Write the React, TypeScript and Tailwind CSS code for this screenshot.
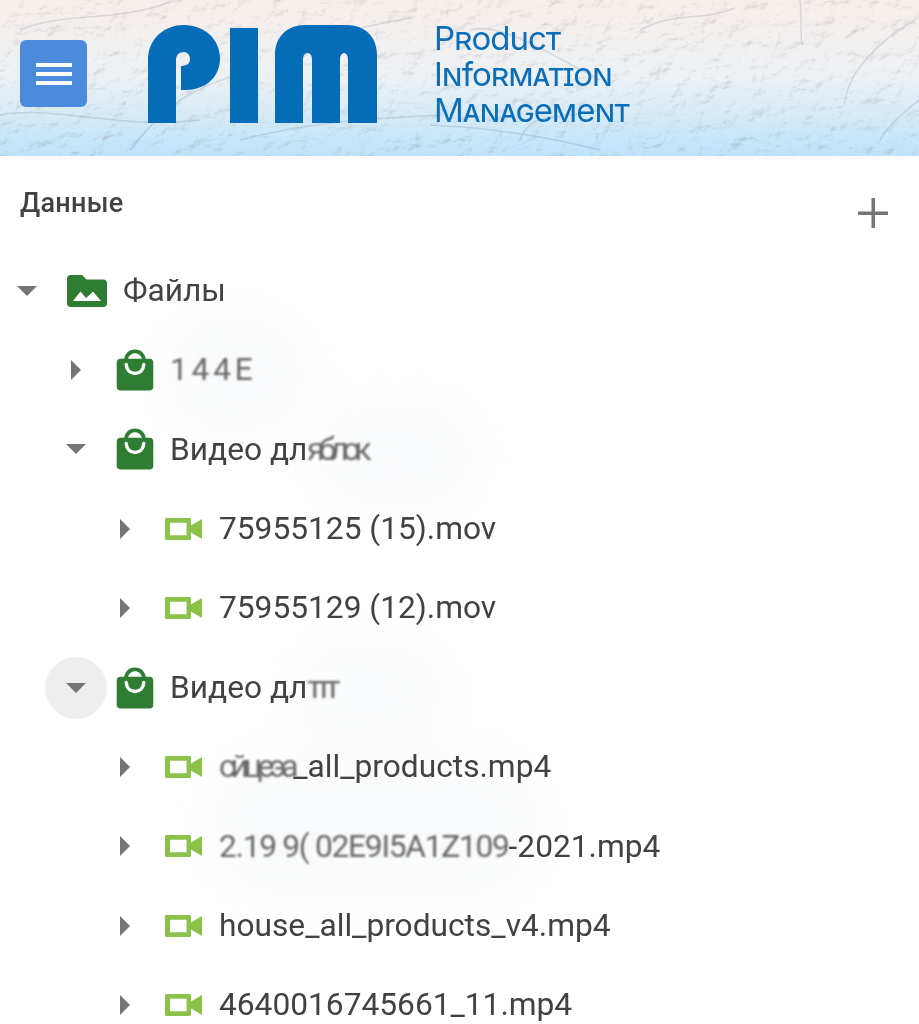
const font = "font-['Roboto',sans-serif]";

function Caret({ open }: { open: boolean }) {
  return (
    <svg width="20" height="20" viewBox="0 0 20 20" className="block">
      {open ? <path d="M0 5h20l-10 10z" fill="#757575" /> : <path d="M5 0v20l10-10z" fill="#757575" />}
    </svg>
  );
}

function Bag() {
  return (
    <svg width="38" height="42" viewBox="0 0 38 42" className="block">
      <path fillRule="evenodd" d="M19 0.500C12.800 0.500 9 4.800 8.200 9.800H4.200C2.200 9.800 0.700 11.400 0.700 13.400V38c0 2 1.600 3.600 3.600 3.600h29.400c2 0 3.600-1.600 3.600-3.600V13.400c0-2-1.600-3.600-3.600-3.600H29.800C29 4.800 25.200 0.500 19 0.500zM19 4.200C15.600 4.200 12.900 6.500 12.100 9.800H25.900C25.100 6.500 22.400 4.200 19 4.200z" fill="#2e7d32" />
      <path d="M10.200 15.500C10.700 21 14.200 24.500 19 24.500S27.300 21 27.800 15.500" fill="none" stroke="#fff" strokeWidth="3.400" strokeLinecap="round" />
    </svg>
  );
}

function Folder() {
  return (
    <svg width="40" height="32" viewBox="0 0 40 32" className="block">
      <path d="M3.500 0H15l4.500 4.500H36.500c2 0 3.500 1.500 3.500 3.500v20.500c0 2-1.500 3.500-3.500 3.500H3.500C1.500 32 0 30.500 0 28.500V3.500C0 1.500 1.500 0 3.500 0z" fill="#2e7d32" />
      <path d="M6 26l7.500-9.500 5.500 6.500 4-3.500 3-3 8 9.500z" fill="#fff" />
    </svg>
  );
}

function Video() {
  return (
    <svg width="37" height="22" viewBox="0 0 37 22" className="block">
      <path d="M1.500 0h23c.8 0 1.500.7 1.500 1.500V7.500L37 1v20l-11-6.500v6c0 .8-.7 1.500-1.500 1.500h-23C.7 22 0 21.300 0 20.500v-19C0 .7.700 0 1.500 0zM5 4.800v12.400h16.500V4.800z" fill="#8bc34a" fillRule="evenodd" />
    </svg>
  );
}

function Row({
  indent,
  open,
  icon,
  active,
  children,
}: {
  indent: string;
  open: boolean;
  icon: React.ReactNode;
  active?: boolean;
  children: React.ReactNode;
}) {
  return (
    <div className={`flex h-[79.400px] items-center ${indent}`}>
      <div className={`flex h-[62px] w-[62px] shrink-0 items-center justify-center rounded-full ${active ? "bg-[#eeeeee]" : ""}`}>
        <Caret open={open} />
      </div>
      <div className="flex w-[63px] shrink-0 items-center pl-[9px]">{icon}</div>
      <div className="whitespace-nowrap text-[31.700px] leading-none text-[#424242]">{children}</div>
    </div>
  );
}

function Smudge({ text, track }: { text: string; track: string }) {
  return <span className={`inline-block text-[#666666] blur-[0.8px] ${track}`}>{text}</span>;
}

function Halo({ className }: { className: string }) {
  return <div className={`absolute -z-10 rounded-full bg-[#f9fafb] blur-xl ${className}`} />;
}

const scratches = [
  "M20 30C60 12 120 22 170 2",
  "M130 150C170 100 190 90 250 70",
  "M470 30C500 20 560 60 600 80",
  "M640 30C680 10 700 22 735 8",
  "M800 0C802 20 800 30 802 45",
  "M845 100C850 70 880 40 915 20",
  "M520 140C530 110 560 120 600 110",
  "M0 115C60 105 120 130 200 120",
  "M240 140C300 125 340 120 440 115",
  "M430 125C500 128 560 140 600 150",
  "M880 140C885 130 900 115 919 100",
  "M300 60C320 40 340 30 410 18",
];

export default function App() {
  return (
    <div className={`relative isolate h-[1024px] w-[919px] overflow-hidden bg-white ${font}`}>
      <header className="relative flex h-[156px] items-start overflow-hidden bg-gradient-to-b from-[#f7eeea] via-[#edf1f4] via-50% to-[#bde3f9]">
        <svg className="absolute inset-0 h-full w-full opacity-70 mix-blend-multiply blur-[0.5px]" aria-hidden="true">
          <filter id="tex">
            <feTurbulence type="fractalNoise" baseFrequency="0.05 0.07" numOctaves="4" seed="11" />
            <feDiffuseLighting surfaceScale="2.600" lightingColor="#ffffff" diffuseConstant="1.180">
              <feDistantLight azimuth="45" elevation="62" />
            </feDiffuseLighting>
          </filter>
          <rect width="100%" height="100%" filter="url(#tex)" />
          <g fill="none" stroke="#a8b8c4" strokeWidth="1.500" opacity="0.5">
            {scratches.map((d) => (
              <path key={d} d={d} />
            ))}
          </g>
        </svg>
        <div className="relative ml-[20px] mt-[40px] flex h-[67px] w-[67px] shrink-0 flex-col items-center justify-center gap-[5px] rounded-[6px] bg-[#4a8bdc]">
          <div className="h-[4px] w-[36px] bg-white" />
          <div className="h-[4px] w-[36px] bg-white" />
          <div className="h-[4px] w-[36px] bg-white" />
        </div>
        <svg className="relative ml-[61px] mt-[25px] block shrink-0" width="230" height="98" viewBox="148 25 230 98" role="img" aria-label="PIM logo">
          <path d="M148 123V60C148 38 165 25 184 25C205 25 220 40 220 58C220 78 205 90 185 90H181V66C186 66 190 64 190 59C190 55 187 52 184 52C179 52 176 55 176 60V123Z" fill="#056db8" />
          <rect x="230" y="28" width="28" height="95" fill="#056db8" />
          <path d="M275 123V55C275 36 288 25 305 25H347C364 25 377 36 377 55V123H348V60C348 55 346 53 344 53C342 53 340 55 340 60V123H312V60C312 55 310 53 307.500 53C305 53 303 55 303 60V123Z" fill="#056db8" />
        </svg>
        <div className="relative ml-[56px] mt-[20px] flex flex-col font-['Inter',sans-serif] text-[33px] font-normal leading-[36px] tracking-[-0.03em] text-[#0a6eb8] blur-[0.4px] [font-variant-caps:small-caps]">
          <span>Product</span>
          <span>Information</span>
          <span>Management</span>
        </div>
      </header>
      <div className="flex items-start justify-between pl-[20px] pr-[31px] pt-[34px]">
        <span className="text-[27px] font-medium leading-[26px] tracking-[0.01em] text-[#424242] blur-[0.3px]">Данные</span>
        <svg width="30" height="30" viewBox="0 0 30 30" className="mt-[8px] block blur-[0.3px]">
          <path d="M13.500 0h3.500v13.500H30v3.500H17V30h-3.500V17H0v-3.500h13.500z" fill="#757575" />
        </svg>
      </div>
      <Halo className="left-[170px] top-[320px] h-[110px] w-[130px]" />
      <Halo className="left-[320px] top-[410px] h-[90px] w-[150px]" />
      <Halo className="left-[300px] top-[650px] h-[90px] w-[140px]" />
      <Halo className="left-[215px] top-[760px] h-[130px] w-[320px]" />
      <div className="mt-[23px] blur-[0.4px]">
        <Row indent="-ml-[4px]" open={true} icon={<Folder />}>
          <span className="ml-[2px]">Файлы</span>
        </Row>
        <Row indent="pl-[45px]" open={false} icon={<Bag />}>
          <Smudge text="144E" track="tracking-[0.12em]" />
        </Row>
        <Row indent="pl-[45px]" open={true} icon={<Bag />}>
          Видео дл
          <Smudge text="яблок" track="tracking-[-0.19em]" />
        </Row>
        <Row indent="pl-[94px]" open={false} icon={<Video />}>75955125 (15).mov</Row>
        <Row indent="pl-[94px]" open={false} icon={<Video />}>75955129 (12).mov</Row>
        <Row indent="pl-[45px]" open={true} active={true} icon={<Bag />}>
          Видео дл
          <Smudge text="ттт" track="tracking-[-0.2em]" />
        </Row>
        <Row indent="pl-[94px]" open={false} icon={<Video />}>
          <Smudge text="сйцеэа" track="tracking-[-0.16em]" />_all_products.mp4
        </Row>
        <Row indent="pl-[94px]" open={false} icon={<Video />}>
          <Smudge text="2.19 9( 02E9I5A1Z109" track="tracking-[-0.04em]" />-2021.mp4
        </Row>
        <Row indent="pl-[94px]" open={false} icon={<Video />}>house_all_products_v4.mp4</Row>
        <Row indent="pl-[94px]" open={false} icon={<Video />}>4640016745661_11.mp4</Row>
      </div>
    </div>
  );
}
